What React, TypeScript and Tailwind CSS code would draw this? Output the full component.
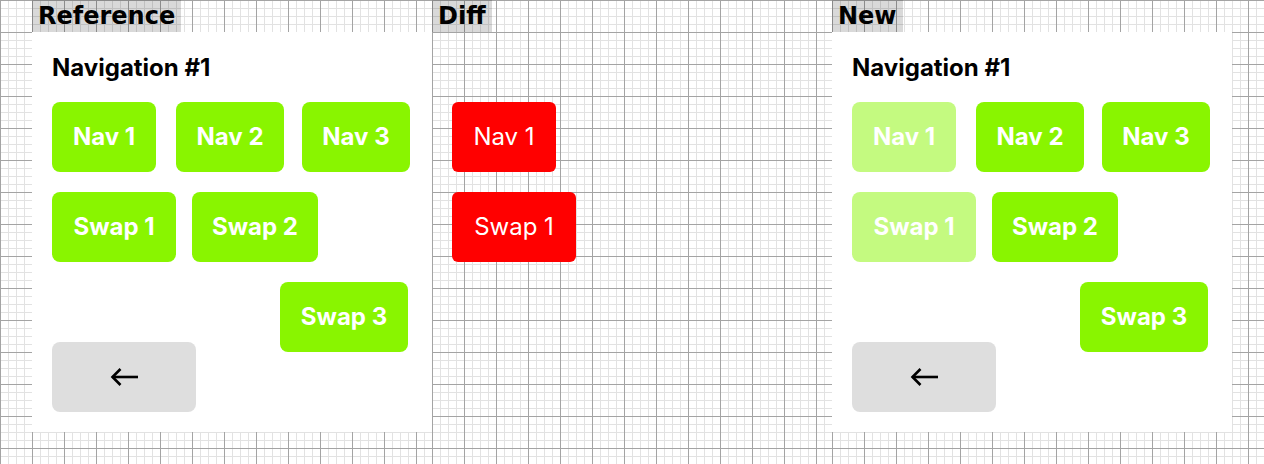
import React from 'react';

const grid =
  'bg-white bg-[linear-gradient(to_right,#a4a4a4_1px,transparent_1px),linear-gradient(to_bottom,#a4a4a4_1px,transparent_1px),linear-gradient(to_right,#e2e2e2_1px,transparent_1px),linear-gradient(to_bottom,#e2e2e2_1px,transparent_1px)] bg-[size:32px_32px,32px_32px,8px_8px,8px_8px]';

const Label = ({ text }: { text: string }) => (
  <div className="h-8 flex">
    <span className="px-[6px] leading-8 bg-black/15 text-black text-[24px] font-bold font-[family-name:'DejaVu_Sans',sans-serif]">
      {text}
    </span>
  </div>
);

const NavButton = ({ text, w, faded, className = '' }: { text: string; w: string; faded?: boolean; className?: string }) => (
  <div
    className={`${w} ${className} h-[70px] shrink-0 rounded-lg flex items-center justify-center text-white text-2xl font-bold ${
      faded ? 'bg-[#c4fa80]' : 'bg-[#89f500]'
    }`}
  >
    {text}
  </div>
);

const BackArrow = () => (
  <svg width="29" height="18" viewBox="0 0 29 18" fill="none" stroke="black" strokeWidth="2.6">
    <path d="M28 9H2.5" />
    <path d="M10.5 1L2.5 9l8 8" />
  </svg>
);

const Card = ({ faded }: { faded?: boolean }) => (
  <div className="w-[400px] h-[400px] bg-white p-5 flex flex-col font-[family-name:Inter,sans-serif]">
    <h1 className="h-8 leading-8 text-2xl font-bold text-black">Navigation #1</h1>
    <div className="flex mt-[18px]">
      <NavButton text="Nav 1" w="w-[104px]" faded={faded} />
      <NavButton text="Nav 2" w="w-[108px]" className="ml-5" />
      <NavButton text="Nav 3" w="w-[108px]" className="ml-[18px]" />
    </div>
    <div className="flex mt-5">
      <NavButton text="Swap 1" w="w-[124px]" faded={faded} />
      <NavButton text="Swap 2" w="w-[126px]" className="ml-4" />
    </div>
    <div className="flex mt-5">
      <NavButton text="Swap 3" w="w-[128px]" className="ml-[228px]" />
    </div>
    <div className="-mt-2.5 w-[144px] h-[70px] rounded-lg bg-[#dedede] flex items-center justify-center">
      <BackArrow />
    </div>
  </div>
);

const DiffBox = ({ text, w, className = '' }: { text: string; w: string; className?: string }) => (
  <div className={`${w} ${className} h-[70px] rounded-md bg-[#ff0000] flex items-center justify-center text-white text-2xl font-normal`}>
    {text}
  </div>
);

const Diff = () => (
  <div className="w-[400px] h-[400px] p-5 flex flex-col font-[family-name:Inter,sans-serif]">
    <div className="h-8" />
    <div className="flex mt-[18px]">
      <DiffBox text="Nav 1" w="w-[104px]" />
    </div>
    <div className="flex mt-5">
      <DiffBox text="Swap 1" w="w-[124px]" />
    </div>
  </div>
);

export default function App() {
  return (
    <div className="flex w-[1264px] h-[464px] overflow-hidden">
      <div className={`w-[432px] h-full pl-8 flex flex-col ${grid}`}>
        <Label text="Reference" />
        <Card />
      </div>
      <div className={`w-[400px] h-full flex flex-col ${grid}`}>
        <Label text="Diff" />
        <Diff />
      </div>
      <div className={`w-[432px] h-full pr-8 flex flex-col ${grid}`}>
        <Label text="New" />
        <Card faded />
      </div>
    </div>
  );
}
